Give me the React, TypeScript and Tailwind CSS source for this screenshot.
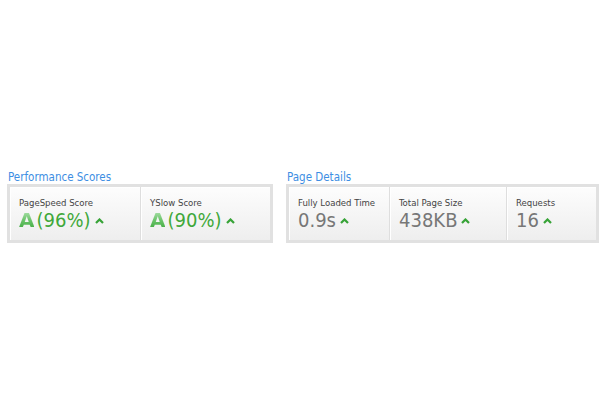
import React from "react";

const font = { fontFamily: '"DejaVu Sans Condensed", "DejaVu Sans", Verdana, sans-serif', fontStretch: "condensed" as const };

function Caret() {
  return (
    <svg width="9" height="6" viewBox="0 0 9 6" className="ml-[4px] mb-[6px]">
      <path d="M1 5 L4.5 1.5 L8 5" fill="none" stroke="#37a337" strokeWidth="2.2" strokeLinejoin="miter" />
    </svg>
  );
}

function Cell({ label, children, className = "" }: { label: string; children: React.ReactNode; className?: string }) {
  return (
    <div className={"flex flex-col pl-[9px] pt-[10px] pb-[10px] bg-gradient-to-b from-[#fdfdfd] to-[#eeeeee] shadow-[inset_1px_1px_0_#ffffff] " + className}>
      <div className="text-[9.5px] leading-[12px] text-[#444]">{label}</div>
      <div className="mt-[1px] flex items-end h-[20px] text-[20px] leading-[20px]">{children}</div>
    </div>
  );
}

function Grade({ pct }: { pct: string }) {
  return (
    <>
      <span
        className="font-bold text-[20px] leading-[20px] bg-gradient-to-b from-[#b2e4b2] via-[#6cc46c] to-[#3aa83a] bg-clip-text text-transparent"
        style={{ fontFamily: '"DejaVu Sans", sans-serif', fontStretch: "normal" }}
      >
        A
      </span>
      <span className="ml-[2px] text-[#3fa83a]">({pct})</span>
      <Caret />
    </>
  );
}

export default function App() {
  return (
    <div className="w-[600px] h-[400px] bg-white" style={font}>
      <div className="flex pt-[170px] pl-[7px] gap-[13px]">
        <div className="flex flex-col w-[266px]">
          <div className="pl-[1px] text-[11.5px] leading-[14px] text-[#3d8ee3]">Performance Scores</div>
          <div className="flex border-[3px] border-[#e1e1e1]">
            <Cell label="PageSpeed Score" className="w-[131px] border-r border-[#dedede]">
              <Grade pct="96%" />
            </Cell>
            <Cell label="YSlow Score" className="flex-1">
              <Grade pct="90%" />
            </Cell>
          </div>
        </div>
        <div className="flex flex-col w-[313px]">
          <div className="pl-[1px] text-[11.5px] leading-[14px] text-[#3d8ee3]">Page Details</div>
          <div className="flex border-[3px] border-[#e1e1e1]">
            <Cell label="Fully Loaded Time" className="w-[101px] border-r border-[#dedede]">
              <span className="text-[#777]">0.9s</span>
              <Caret />
            </Cell>
            <Cell label="Total Page Size" className="w-[117px] border-r border-[#dedede]">
              <span className="text-[#777]">438KB</span>
              <Caret />
            </Cell>
            <Cell label="Requests" className="flex-1">
              <span className="text-[#777]">16</span>
              <Caret />
            </Cell>
          </div>
        </div>
      </div>
    </div>
  );
}
